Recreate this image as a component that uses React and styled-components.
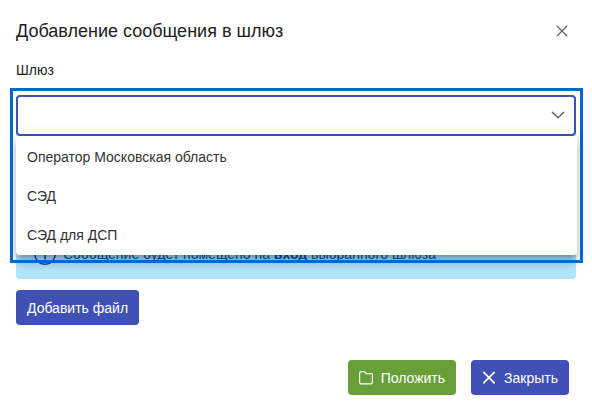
import React, { useState } from "react";
import styled, { createGlobalStyle } from "styled-components";

const gateways = ["Оператор Московская область", "СЭД", "СЭД для ДСП"];

const App = () => {
  const [gateway, setGateway] = useState("");
  const [open, setOpen] = useState(true);

  const choose = (name) => {
    setGateway(name);
    setOpen(false);
  };

  return (
    <>
      <GlobalStyle />
      <Dialog role="dialog" aria-labelledby="dialog-title">
        <Header>
          <Title id="dialog-title">Добавление сообщения в шлюз</Title>
          <CloseButton type="button" aria-label="Закрыть окно">
            <CrossIcon size={12} />
          </CloseButton>
        </Header>
        <Label htmlFor="gateway">Шлюз</Label>
        <Dropdown>
          <Select
            id="gateway"
            value={gateway}
            onChange={(e) => choose(e.target.value)}
            onClick={() => setOpen(true)}
          >
            <option value=""></option>
            {gateways.map((name) => (
              <option key={name}>{name}</option>
            ))}
          </Select>
          <Chevron width="14" height="8" viewBox="0 0 14 8" aria-hidden="true">
            <path d="M1 1l6 5.8L13 1" />
          </Chevron>
          {open && (
            <Menu>
              {gateways.map((name) => (
                <li key={name}>
                  <Option type="button" onClick={() => choose(name)}>
                    {name}
                  </Option>
                </li>
              ))}
            </Menu>
          )}
          {open && <Highlight />}
        </Dropdown>
        <Message>
          <InfoIcon />
          <span>
            Сообщение будет помещено на <b>вход</b> выбранного шлюза
          </span>
        </Message>
        <Button type="button">Добавить файл</Button>
        <Footer>
          <Button type="button" $success>
            <FolderIcon />
            Положить
          </Button>
          <Button type="button">
            <CrossIcon size={14} bold />
            Закрыть
          </Button>
        </Footer>
      </Dialog>
    </>
  );
};

const CrossIcon = ({ size, bold }) => (
  <svg width={size} height={size} viewBox="0 0 14 14" fill="none" aria-hidden="true">
    <path
      d={bold ? "M1.8 1.4l10.4 10.4M12.2 1.4L1.8 11.8" : "M1.2 1.2l11.6 11.6M12.8 1.2L1.2 12.8"}
      stroke="currentColor"
      strokeWidth={bold ? 1.7 : 1.4}
      strokeLinecap="round"
    />
  </svg>
);

const FolderIcon = () => (
  <svg width="14" height="14" viewBox="0 0 14 14" fill="none" aria-hidden="true">
    <path
      d="M.6 2q0-1.400 1.400-1.400h3q.5 0 .8.4L7.200 2.600h4.800q1.400 0 1.400 1.400v7.400q0 1.400-1.400 1.400H2q-1.400 0-1.400-1.400z"
      stroke="currentColor"
      strokeWidth="1.200"
      strokeLinejoin="round"
    />
  </svg>
);

const InfoIcon = () => (
  <svg width="22" height="22" viewBox="0 0 22 22" fill="none" aria-hidden="true">
    <circle cx="11" cy="11" r="10.2" stroke="currentColor" strokeWidth="1.500" />
    <path d="M11 9.500v7M11 5.500v1.500" stroke="currentColor" strokeWidth="1.600" />
  </svg>
);

const GlobalStyle = createGlobalStyle`
  * {
    box-sizing: border-box;
  }
  body {
    margin: 0;
    background: #ffffff;
    color: #212121;
    font-family: "Liberation Sans", Arial, sans-serif;
    font-size: 14px;
  }
  button,
  select {
    font: inherit;
  }
`;
const Dialog = styled.div`
  padding: 16px;
`;
const Header = styled.header`
  display: flex;
  align-items: center;
  justify-content: space-between;
  height: 30px;
  padding-right: 8px;
`;
const Title = styled.h1`
  margin: 0;
  font-size: 18px;
  font-weight: 400;
`;
const CloseButton = styled.button`
  display: flex;
  padding: 0;
  border: 0;
  background: none;
  color: #616161;
  cursor: pointer;
`;
const Label = styled.label`
  display: block;
  margin: 16px 0;
  line-height: 17px;
`;
const Dropdown = styled.div`
  position: relative;
`;
const Select = styled.select`
  display: block;
  width: 100%;
  height: 41px;
  padding: 0 36px 0 10px;
  border: 2px solid #3f51b5;
  border-radius: 4px;
  background: #ffffff;
  color: inherit;
  appearance: none;
  outline: none;
`;
const Chevron = styled.svg`
  position: absolute;
  top: 16px;
  right: 11px;
  fill: none;
  stroke: #616161;
  stroke-width: 1.500;
  pointer-events: none;
`;
const Menu = styled.ul`
  position: absolute;
  z-index: 1;
  top: 100%;
  left: 0;
  right: -1px;
  margin: 0;
  padding: 1px 0;
  list-style: none;
  border-radius: 4px;
  background: #ffffff;
  box-shadow: 0 5px 5px -3px rgba(0, 0, 0, 0.2),
    0 8px 10px 1px rgba(0, 0, 0, 0.14), 0 3px 14px 2px rgba(0, 0, 0, 0.12);
`;
const Option = styled.button`
  display: block;
  width: 100%;
  height: 39px;
  padding: 0 11px;
  border: 0;
  background: none;
  color: #333333;
  text-align: left;
  cursor: pointer;
`;
const Highlight = styled.div`
  position: absolute;
  z-index: 2;
  top: -7px;
  left: -6px;
  right: -7px;
  height: 175px;
  border: 3px solid #0066d0;
  pointer-events: none;
`;
const Message = styled.div`
  display: flex;
  align-items: center;
  gap: 7px;
  height: 50px;
  margin: 93px 0 11px;
  padding: 0 18px;
  border-radius: 4px;
  background: #b3e5fc;
  color: #01579b;
`;
const Button = styled.button`
  display: inline-flex;
  align-items: center;
  gap: 8px;
  height: 35px;
  padding: 0 11px;
  border: 0;
  border-radius: 4px;
  background: ${(props) => (props.$success ? "#689f38" : "#3f51b5")};
  color: #ffffff;
  cursor: pointer;
`;
const Footer = styled.footer`
  display: flex;
  justify-content: flex-end;
  gap: 15px;
  margin-top: 35px;
  padding-right: 7px;
`;

export default App;
